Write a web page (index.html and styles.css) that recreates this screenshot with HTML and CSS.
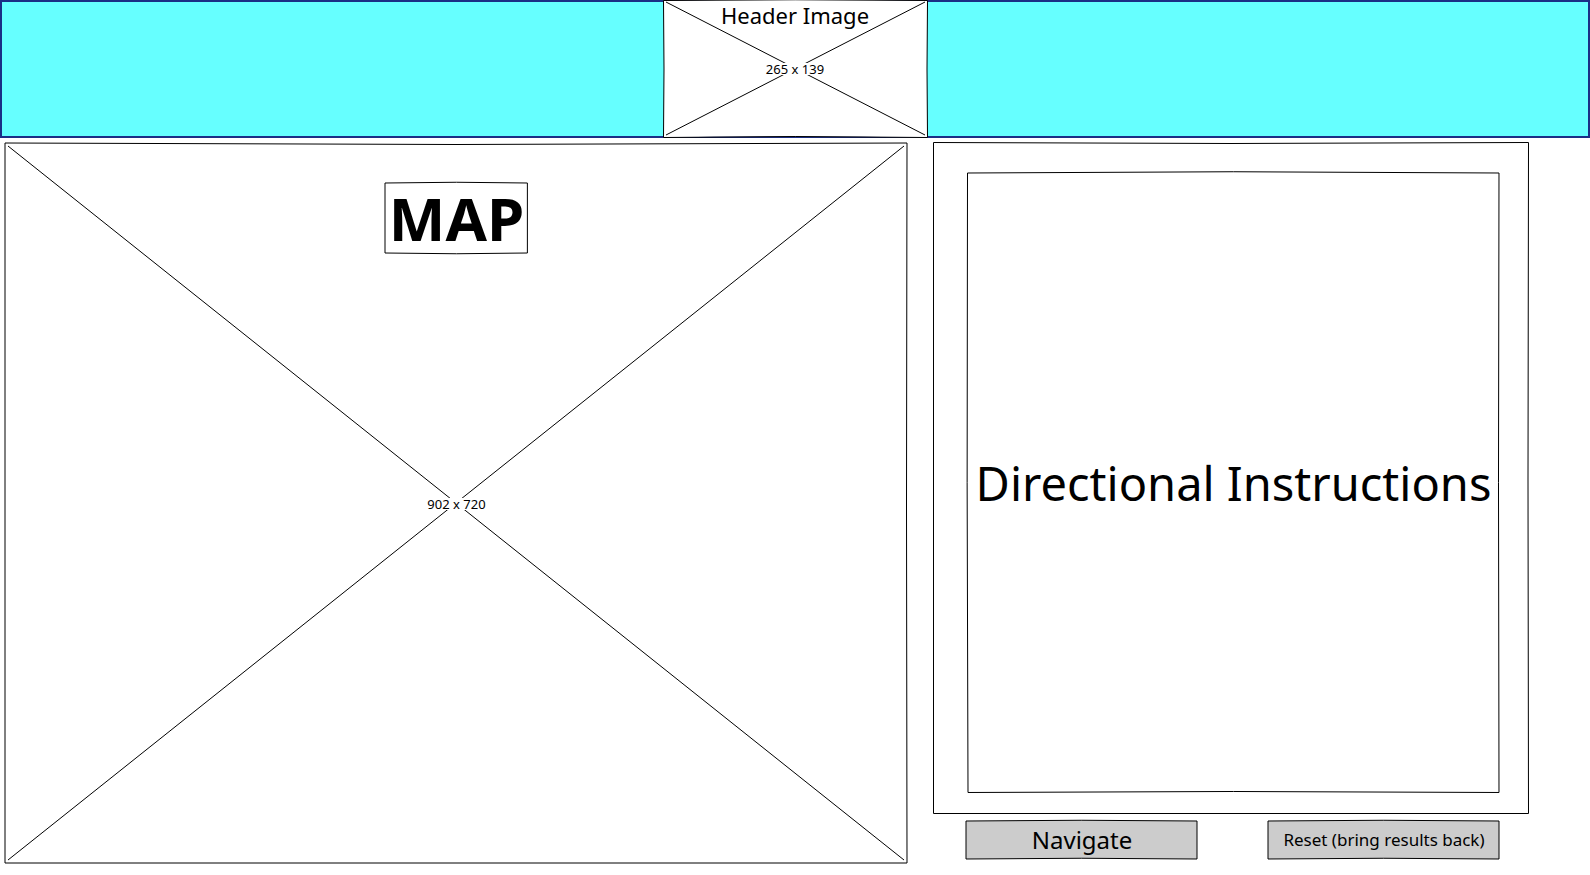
FILE: index.html
```html
<!DOCTYPE html>
<html lang="en">
<head>
<meta charset="utf-8">
<title>Map navigation wireframe</title>
<link rel="stylesheet" href="styles.css">
</head>
<body>
<header class="banner">
  <div class="banner-image">
    <svg class="sketch" viewBox="0 0 265 138" preserveAspectRatio="none" aria-hidden="true">
      <path class="fill-white" d="M.5 .5Q132-1 264.500 .5Q263.500 69 264.500 137.500Q132 135.500 .5 137.500Q1.500 69 .5 .5Z"/>
      <path d="M3 2L262 135M3 135L262 2"/>
    </svg>
    <h1 class="banner-title">Header Image</h1>
    <span class="size-label">265 x 139</span>
  </div>
</header>
<main class="workspace">
  <section class="map">
    <svg class="sketch" viewBox="0 0 903 721" preserveAspectRatio="none" aria-hidden="true">
      <path d="M0 0Q451 3 902 0Q901 360 902 720H0Z"/>
      <path d="M3 3L899 717M3 717L899 3"/>
    </svg>
    <div class="map-title">
      <svg class="sketch" viewBox="0 0 144 72" preserveAspectRatio="none" aria-hidden="true">
        <path class="fill-white" d="M0 1Q72-.5 143 1V71Q72 72.500 0 71Z"/>
      </svg>
      <h2 class="map-heading">MAP</h2>
    </div>
    <span class="size-label">902 x 720</span>
  </section>
  <section class="side">
    <div class="panel">
      <svg class="sketch" viewBox="0 0 596 672" preserveAspectRatio="none" aria-hidden="true">
        <path d="M.5 .5Q298 2.500 595.500 .5Q594.500 336 595.500 671.500H.5Z"/>
      </svg>
      <div class="directions">
        <svg class="sketch" viewBox="0 0 532 620" preserveAspectRatio="none" aria-hidden="true">
          <path d="M.5 1Q266-1.500 531 1Q530 310 531 619.500Q266 617.500 1 619.500Q-.5 310 .5 1Z"/>
        </svg>
        <h2 class="directions-title">Directional Instructions</h2>
      </div>
    </div>
    <div class="actions">
      <button class="action" type="button">
        <svg class="sketch" viewBox="0 0 232 39" preserveAspectRatio="none" aria-hidden="true">
          <path class="fill-grey" d="M0 1Q116-.5 231 1V39Q116 37.500 0 39Z"/>
        </svg>
        <span class="action-text">Navigate</span>
      </button>
      <button class="action action-small" type="button">
        <svg class="sketch" viewBox="0 0 232 39" preserveAspectRatio="none" aria-hidden="true">
          <path class="fill-grey" d="M0 1Q116-.5 231 1V39Q116 37.500 0 39Z"/>
        </svg>
        <span class="action-text">Reset (bring results back)</span>
      </button>
    </div>
  </section>
</main>
</body>
</html>
```
FILE: styles.css
```css
* {
  box-sizing: border-box;
}

body {
  margin: 0;
  background: #fff;
  color: #000;
  font-family: "Comic Sans MS", "Noto Sans", sans-serif;
}

h1,
h2 {
  margin: 0;
  font-weight: 400;
}

/* Hand-drawn outline laid behind the content of its box */
.sketch {
  position: absolute;
  inset: 0;
  z-index: -1;
  width: 100%;
  height: 100%;
  overflow: visible;
  fill: none;
  stroke: #000;
  stroke-width: 1px;
}

.sketch path {
  vector-effect: non-scaling-stroke;
}

.sketch .fill-white {
  fill: #fff;
}

.sketch .fill-grey {
  fill: #ccc;
}

.banner,
.banner-image,
.map,
.map-title,
.panel,
.directions,
.action {
  position: relative;
  isolation: isolate;
}

.banner {
  display: flex;
  justify-content: center;
  height: 138px;
  border: 2px solid #1b2f86;
  background: #6ff;
}

.banner-image {
  display: grid;
  place-items: center;
  width: 265px;
  margin: -2px 0;
}

.banner-image > *,
.map > * {
  grid-area: 1 / 1;
}

.banner-title {
  align-self: start;
  font-size: 22px;
  line-height: 30px;
}

.size-label {
  background: #fff;
  font-size: 13px;
  line-height: 12px;
}

.workspace {
  display: grid;
  grid-template-columns: 903fr 596fr;
  gap: 25px;
  min-height: calc(100vh - 138px);
  padding: 4px 61px 11px 5px;
}

.map {
  display: grid;
  place-items: center;
  margin-top: 1px;
}

.map-title {
  align-self: start;
  margin-top: 39px;
  padding: 0 4px;
}

.map-heading {
  font-size: 60px;
  font-weight: 700;
  line-height: 72px;
}

.side {
  display: flex;
  flex-direction: column;
  gap: 6px;
}

.panel {
  display: flex;
  flex: 1;
  padding: 30px 29px 21px 34px;
}

.directions {
  display: flex;
  flex: 1;
  align-items: center;
  justify-content: center;
}

.directions-title {
  font-size: 47px;
  line-height: 60px;
  white-space: nowrap;
}

.actions {
  display: flex;
  justify-content: space-between;
  padding: 0 29px 5px 33px;
}

.action {
  width: 232px;
  height: 39px;
  padding: 0;
  border: 0;
  background: none;
  color: inherit;
  font: inherit;
  font-size: 24px;
  cursor: pointer;
}

.action-small {
  font-size: 17px;
}
```
